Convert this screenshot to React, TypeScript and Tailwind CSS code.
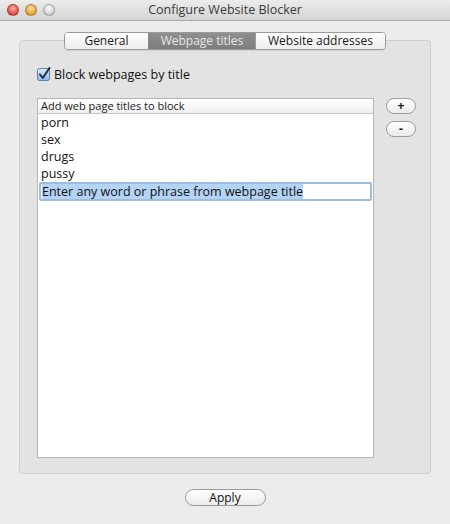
import React from 'react';

const font = { fontFamily: '"Open Sans", "DejaVu Sans", sans-serif' };

function TrafficLight({ color }: { color: string }) {
  return (
    <span
      className="block w-[12px] h-[12px] rounded-full border border-black/25"
      style={{ background: color }}
    />
  );
}

function CheckIcon() {
  return (
    <svg width="14" height="14" viewBox="0 0 14 14">
      <defs>
        <linearGradient id="cb" x1="0" y1="0" x2="0" y2="1">
          <stop offset="0" stopColor="#dbeaf8" />
          <stop offset="1" stopColor="#8fbbe6" />
        </linearGradient>
      </defs>
      <rect x="0.5" y="1.5" width="12" height="12" rx="2" fill="url(#cb)" stroke="#5d7fa8" />
      <path d="M3 7.5 L5.8 11 L12.5 1" fill="none" stroke="#1c2c44" strokeWidth="2" strokeLinecap="round" strokeLinejoin="round" />
    </svg>
  );
}

export default function App() {
  const rows = ['porn', 'sex', 'drugs', 'pussy'];

  return (
    <div className="w-[450px] h-[524px] bg-[#ececec] flex flex-col overflow-hidden text-[#111]" style={font}>
      {/* Title bar */}
      <div className="h-[21px] shrink-0 flex items-center relative bg-gradient-to-b from-[#ececec] to-[#d4d4d4] border-b border-[#a8a8a8]">
        <div className="flex items-center gap-[6px] pl-[7px]">
          <TrafficLight color="radial-gradient(circle at 50% 35%, #ffb3ad, #e0463c 70%)" />
          <TrafficLight color="radial-gradient(circle at 50% 35%, #ffe2a8, #e2a12e 70%)" />
          <TrafficLight color="radial-gradient(circle at 50% 35%, #ffffff, #d0d0d0 70%)" />
        </div>
        <div className="absolute inset-0 flex items-center justify-center text-[12.5px] text-[#3a3a3a] pt-[1px]">
          Configure Website Blocker
        </div>
      </div>

      {/* Tabs */}
      <div className="mt-[11px] flex justify-center relative z-10">
        <div className="flex h-[18px] rounded-[4px] border border-[#9a9a9a] overflow-hidden text-[12px] shadow-[0_1px_1px_rgba(0,0,0,0.08)]">
          <div className="w-[83px] flex items-center justify-center bg-gradient-to-b from-[#ffffff] to-[#ededed] text-[#1a1a1a]">General</div>
          <div className="w-[107px] flex items-center justify-center bg-gradient-to-b from-[#8f8f8f] to-[#7d7d7d] text-[#e6e6e6] border-l border-[#8a8a8a]">Webpage titles</div>
          <div className="w-[130px] flex items-center justify-center bg-gradient-to-b from-[#ffffff] to-[#ededed] text-[#1a1a1a] border-l border-[#9a9a9a]">Website addresses</div>
        </div>
      </div>

      {/* Panel */}
      <div className="-mt-[10px] mx-[19px] h-[434px] bg-[#e3e3e3] border border-[#cfcfcf] rounded-[4px] flex flex-col pl-[17px] pt-[26px]">
        <label className="flex items-center gap-[3px] text-[12.5px] h-[14px]">
          <CheckIcon />
          <span className="pt-[2px]">Block webpages by title</span>
        </label>

        <div className="mt-[17px] flex">
          <div className="w-[337px] h-[360px] bg-white border border-[#b5b5b5] flex flex-col">
            <div className="h-[15px] border-b border-[#c8c8c8] bg-gradient-to-b from-[#ffffff] to-[#f0f0f0] flex items-center pl-[3px] text-[11px] text-[#222]">
              Add web page titles to block
            </div>
            {rows.map((r) => (
              <div key={r} className="h-[17px] flex items-center pl-[3px] pt-[1px] text-[12.5px]">
                {r}
              </div>
            ))}
            <div className="h-[19px] mx-[1px] border-2 border-[#9bbde3] rounded-[2px] flex items-center pl-[1px] text-[12.5px]">
              <span className="bg-[#b4d3f5] leading-[15px]">Enter any word or phrase from webpage title</span>
            </div>
          </div>

          <div className="ml-[12px] flex flex-col gap-[7px]">
            <button className="w-[30px] h-[16px] rounded-full border border-[#9e9e9e] bg-gradient-to-b from-[#ffffff] to-[#ebebeb] text-[12px] leading-none flex items-center justify-center font-bold">+</button>
            <button className="w-[30px] h-[16px] rounded-full border border-[#9e9e9e] bg-gradient-to-b from-[#ffffff] to-[#ebebeb] text-[12px] leading-none flex items-center justify-center font-bold">-</button>
          </div>
        </div>
      </div>

      {/* Apply */}
      <div className="mt-[15px] flex justify-center">
        <button className="w-[81px] h-[17px] rounded-full border border-[#9a9a9a] bg-gradient-to-b from-[#ffffff] to-[#ebebeb] text-[12px] flex items-center justify-center">
          Apply
        </button>
      </div>
    </div>
  );
}
